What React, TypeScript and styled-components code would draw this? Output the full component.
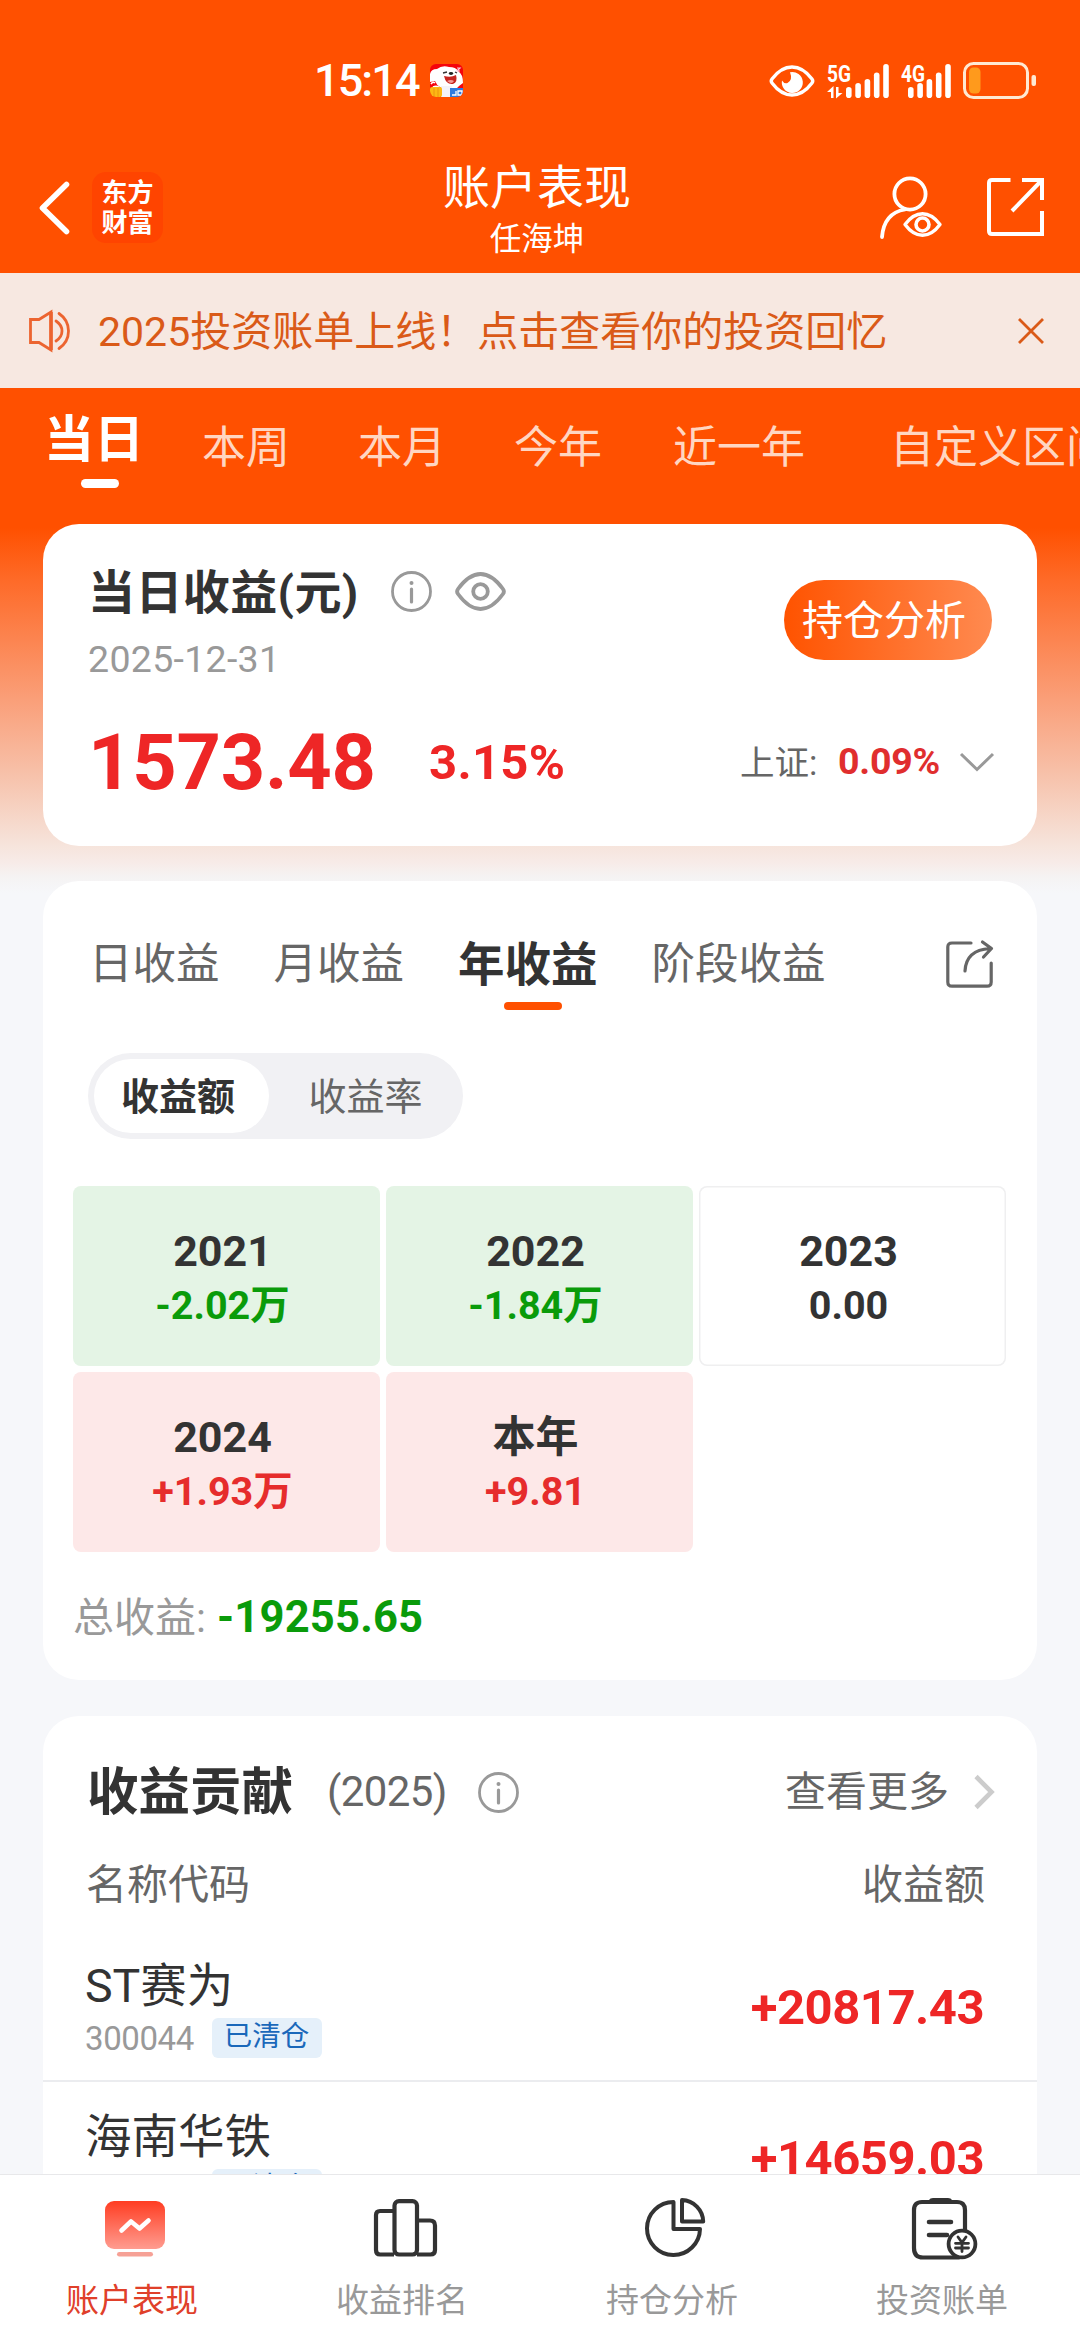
import React from "react";
import styled, { createGlobalStyle } from "styled-components";

const GlobalStyle = createGlobalStyle`
  * { box-sizing: border-box; }
  body {
    margin: 0;
    background: #f6f7fa;
    font-family: Roboto, "Noto Sans CJK SC", sans-serif;
    color: #333;
  }
  svg { display: block; flex: none; overflow: visible; }
`;

const Screen = styled.div`
  width: 1080px;
  height: 2340px;
  display: flex;
  flex-direction: column;
  overflow: hidden;
  background: linear-gradient(
    #ff5000 0, #ff5000 528px, #fe6a28 580px, #fa9f79 700px,
    #f7bfa7 770px, #f6e3da 843px, #f7ebe8 863px, #f5f3f3 877px, #f6f7fa 893px
  );
`;

const Content = styled.main`
  flex: 1;
  min-height: 0;
  overflow: hidden;
  display: flex;
  flex-direction: column;
`;

/* ---------- status bar ---------- */

const StatusBar = styled.div`
  flex: none;
  height: 161px;
  padding: 0 44px 0 314px;
  display: flex;
  align-items: center;
  color: #fff;
`;

const Clock = styled.span`
  font-size: 45px;
  font-weight: 500;
  line-height: 60px;
  letter-spacing: -1.9px;
  width: 116px;
  padding-top: 1px;
  white-space: nowrap;
`;

const StatusIcons = styled.div`
  margin-left: auto;
  display: flex;
  align-items: center;
`;

const Gap = styled.span<{ $w: number }>`
  flex: none;
  width: ${(p) => p.$w}px;
`;

const MascotIcon = () => (
  <svg width="33" height="33" viewBox="0 0 33 33">
    <defs>
      <clipPath id="mascot">
        <rect width="33" height="33" rx="6" />
      </clipPath>
    </defs>
    <g clipPath="url(#mascot)">
      <rect width="33" height="33" fill="#f5040c" />
      <path d="M0 10q1-5 7-5Q12 1 19 3q7 0 9 4 5 3 5 12l-4 3q-3 4-10 3Q8 25 5 17L0 18z" fill="#fff" />
      <path d="M1 20q2-3 4-1M3 23q4-2 7 1" stroke="#fff" strokeWidth="1.6" fill="none" />
      <rect x="11" y="22" width="11" height="11" fill="#f4f4fa" />
      <path d="M14 12q7 2 12-1 2 7-3 9-7 1-9-8z" fill="#c8241f" />
      <path d="M17 17q4-2 7 0-2 4-7 0z" fill="#f59a96" />
      <ellipse cx="21" cy="9.500" rx="2.200" ry="1.400" fill="#222" />
      <path d="M13 9l4-1M25 8l2 1" stroke="#333" strokeWidth="1.300" />
      <rect x="0" y="23" width="12" height="10" rx="2" fill="#fdb813" />
      <path d="M4 24v9M8 24v9" stroke="#ee9410" strokeWidth="1" />
      <rect x="20" y="24" width="13" height="9" fill="#2f7be0" />
      <path d="M22 31h4v-4M28 27h4v4h-4z" stroke="#fff" strokeWidth="1.300" fill="none" />
      <path d="M27 4h3l-3 3h3" stroke="#ffc4d8" strokeWidth="1.200" fill="none" />
    </g>
  </svg>
);

const StatusEyeIcon = () => (
  <svg width="46" height="32" viewBox="0 0 46 32" fill="none">
    <path
      d="M3 14Q12 2 23 2t20 12q1.500 2 0 4Q34 30 23 30T3 18q-1.500-2 0-4z"
      stroke="#fff"
      strokeWidth="3.400"
    />
    <path d="M21 7.200A10.500 10.500 0 1 1 13 15.500Q15 19 18.500 18 24 15 21 7.200z" fill="#fff" />
  </svg>
);

const barTops = [23, 19, 15, 8.500, 0];

const SignalIcon = ({ label, barsX, width, arrows }: { label: string; barsX: number; width: number; arrows?: boolean }) => (
  <svg width={width} height="34" viewBox={`0 0 ${width} 34`} fill="#fff">
    <text x="0" y="17.500" fontFamily="Roboto, sans-serif" fontWeight="700" fontSize="24" textLength="24" lengthAdjust="spacingAndGlyphs">
      {label}
    </text>
    {arrows && (
      <path d="M6.500 34h-2.500v-6H0l6.500-6zM9 23h2.500v6H15.500L9 34.500z" />
    )}
    {barTops.map((top, i) => (
      <rect key={top} x={barsX + i * 9.300} y={top} width="5.600" height={34 - top} rx="2.800" />
    ))}
  </svg>
);

const BatteryIcon = () => (
  <svg width="73" height="37" viewBox="0 0 73 37">
    <rect x="1.500" y="1.500" width="63" height="34" rx="9" fill="none" stroke="#ffe9d2" strokeWidth="3" />
    <rect x="6" y="5.500" width="11.500" height="26" rx="4.500" fill="#ff9a1c" />
    <rect x="68.500" y="13" width="4.500" height="11" rx="2" fill="#ffe9d2" />
  </svg>
);

/* ---------- navigation header ---------- */

const NavBar = styled.header`
  flex: none;
  height: 112px;
  padding: 0 36px 0 39px;
  display: grid;
  grid-template-columns: 404px 188px 1fr;
  align-items: start;
  color: #fff;
`;

const NavLeft = styled.div`
  display: flex;
  align-items: center;
  gap: 22px;
  padding-top: 11px;
`;

const Logo = styled.div`
  width: 71px;
  height: 71px;
  border-radius: 14px;
  background: #ff4400;
  display: flex;
  flex-direction: column;
  align-items: center;
  justify-content: center;
  font-size: 26px;
  font-weight: 700;
  line-height: 30px;
`;

const NavTitle = styled.div`
  text-align: center;
  white-space: nowrap;
`;

const Title = styled.h1`
  margin: 0;
  font-size: 47px;
  font-weight: 400;
  line-height: 54px;
`;

const Subtitle = styled.div`
  font-size: 31.500px;
  line-height: 40px;
  margin-top: 5px;
`;

const NavRight = styled.div`
  display: flex;
  justify-content: flex-end;
  align-items: center;
  gap: 46px;
  padding-top: 15px;
`;

const BackIcon = () => (
  <svg width="31" height="52" viewBox="0 0 31 52" fill="none" stroke="#fff" strokeWidth="5.600" strokeLinecap="round" strokeLinejoin="round">
    <path d="M27.500 2.500L3.500 26l24 23.500" />
  </svg>
);

const UserEyeIcon = () => (
  <svg width="62" height="62" viewBox="0 0 62 62" fill="none" stroke="#fff" strokeWidth="3.800">
    <circle cx="31" cy="18" r="15.600" />
    <path d="M3 61Q5 37 26 33.500" strokeLinecap="round" />
    <path d="M26 48.500q8-10.700 17.500-10.700T61 48.500q-8 10.800-17.500 10.800T26 48.500z" strokeWidth="3.400" strokeLinejoin="round" />
    <circle cx="43.500" cy="48.500" r="6.500" strokeWidth="3.600" />
  </svg>
);

const ExportIcon = () => (
  <svg width="57" height="58" viewBox="0 0 57 58" fill="none" stroke="#fff" strokeWidth="4">
    <path d="M23.500 2H5Q2 2 2 5v48q0 3 3 3h50V33" />
    <path d="M35 2h20v20M55 2L25 33" />
  </svg>
);

/* ---------- announcement ---------- */

const Announcement = styled.div`
  flex: none;
  height: 115px;
  padding: 0 36px 0 29px;
  display: flex;
  align-items: center;
  background: #f7e8e1;
  color: #da5a18;
  font-size: 41px;
  line-height: 60px;
`;

const AnnouncementText = styled.span`
  margin-left: 28px;
  padding-top: 2px;
  flex: 1;
  white-space: nowrap;
`;

const SpeakerIcon = () => (
  <svg width="41" height="42" viewBox="0 0 41 42" fill="none" stroke="#ec6430" strokeWidth="2.800">
    <path d="M1.500 9.500H10L22 2v38L10 32.500H1.500z" />
    <path d="M22 2v38" strokeWidth="3.600" />
    <path d="M27 11q6 4 6 10t-6 10M30 3.500Q39.500 10 39.500 21T30 38.500" strokeLinecap="round" />
  </svg>
);

const CloseIcon = () => (
  <svg width="26" height="26" viewBox="0 0 26 26" stroke="#da5a18" strokeWidth="2.800">
    <path d="M1 1l24 24M25 1L1 25" />
  </svg>
);

/* ---------- period tabs ---------- */

const PeriodTabs = styled.nav`
  flex: none;
  height: 136px;
  padding: 22px 0 0 44px;
  display: flex;
  align-items: flex-start;
  gap: 68px;
  overflow: hidden;
`;

const PeriodTab = styled.div<{ $active?: boolean; $ml?: number }>`
  flex: none;
  white-space: nowrap;
  line-height: 60px;
  font-size: ${(p) => (p.$active ? 50 : 44)}px;
  font-weight: ${(p) => (p.$active ? 700 : 400)};
  color: ${(p) => (p.$active ? "#fff" : "#ffd6c2")};
  padding-top: ${(p) => (p.$active ? 0 : 8)}px;
  margin-right: ${(p) => (p.$active ? -10 : 0)}px;
  margin-left: ${(p) => p.$ml ?? 0}px;
`;

const Underline = styled.div<{ $w: number; $h: number; $color: string; $mt: number; $shift: number }>`
  width: ${(p) => p.$w}px;
  height: ${(p) => p.$h}px;
  border-radius: 5px;
  background: ${(p) => p.$color};
  margin: ${(p) => p.$mt}px auto 0;
  transform: translateX(${(p) => p.$shift}px);
`;

/* ---------- cards ---------- */

const Card = styled.section<{ $h?: number; $mt?: number }>`
  flex: none;
  width: 994px;
  height: ${(p) => (p.$h ? p.$h + "px" : "auto")};
  margin: ${(p) => p.$mt ?? 0}px 43px 0;
  border-radius: 36px;
  background: #fff;
  overflow: hidden;
`;

const InfoIcon = () => (
  <svg width="41" height="41" viewBox="0 0 41 41" fill="none" stroke="#999">
    <circle cx="20.500" cy="20.500" r="19" strokeWidth="2.800" />
    <path d="M20.500 18v13" strokeWidth="3.200" strokeLinecap="round" />
    <circle cx="20.500" cy="12" r="2" fill="#999" stroke="none" />
  </svg>
);

const EyeIcon = () => (
  <svg width="51" height="39" viewBox="0 0 51 39" fill="none" stroke="#999" strokeWidth="3.800">
    <path d="M3 17Q14 2 25.500 2T48 17q1.800 2.500 0 5Q37 37 25.500 37T3 22q-1.800-2.500 0-5z" />
    <circle cx="25.500" cy="19.500" r="7.300" />
  </svg>
);

const SummaryTop = styled.div`
  display: flex;
  justify-content: space-between;
  padding: 41px 45px 0 45px;
`;

const SummaryTitle = styled.div`
  display: flex;
  align-items: center;
  height: 56px;
  font-size: 47px;
  font-weight: 700;
  line-height: 56px;
  white-space: nowrap;
`;

const SummaryLabel = styled.span`
  width: 303px;
  letter-spacing: 0.4px;
`;

const SummaryIcons = styled.span`
  display: flex;
  align-items: center;
  gap: 23px;
  margin-bottom: 4px;
`;

const SummaryDate = styled.div`
  margin-top: 18px;
  height: 40px;
  line-height: 40px;
  font-size: 37.500px;
  letter-spacing: 0.3px;
  color: #999;
`;

const AnalysisButton = styled.button`
  width: 208px;
  height: 80px;
  margin-top: 15px;
  padding: 2px 8px 0 0;
  border: 0;
  border-radius: 40px;
  background: linear-gradient(90deg, #ff5300, #ff8a50);
  color: #fff;
  font-family: inherit;
  font-size: 41px;
  line-height: 78px;
  white-space: nowrap;
`;

const SummaryNumbers = styled.div`
  display: flex;
  align-items: center;
  height: 100px;
  margin-top: 33px;
  padding: 0 43px 0 45px;
  white-space: nowrap;
`;

const Figure = styled.span<{ $size: number; $w?: number; $color?: string; $ls?: number }>`
  font-size: ${(p) => p.$size}px;
  font-weight: 700;
  color: ${(p) => p.$color ?? "#ee2626"};
  letter-spacing: ${(p) => p.$ls ?? 0}px;
  width: ${(p) => (p.$w ? p.$w + "px" : "auto")};
`;

const IndexName = styled.span`
  margin-left: auto;
  margin-bottom: 4px;
  width: 98px;
  font-size: 34.500px;
  color: #666;
`;

const IndexFigure = styled(Figure)`
  margin-bottom: 2px;
`;

const ChevronDown = () => (
  <svg width="34" height="18" viewBox="0 0 34 18" fill="none" stroke="#999" strokeWidth="3">
    <path d="M1 1l16 15.500L33 1" />
  </svg>
);

/* ---------- yearly profit card ---------- */

const ProfitTabs = styled.div`
  display: flex;
  align-items: flex-start;
  gap: 54px;
  height: 129px;
  padding: 54px 44px 0 46px;
`;

const ProfitTab = styled.div<{ $active?: boolean }>`
  line-height: 60px;
  white-space: nowrap;
  font-size: ${(p) => (p.$active ? 46.500 : 43.500)}px;
  font-weight: ${(p) => (p.$active ? 700 : 400)};
  color: ${(p) => (p.$active ? "#333" : "#666")};
`;

const ShareButton = styled.div`
  margin: 6px 0 0 auto;
`;

const ShareIcon = () => (
  <svg width="47" height="47" viewBox="0 0 47 47" fill="none" stroke="#666" strokeWidth="3.200">
    <path d="M25 2H6Q1.800 2 1.800 6v35q0 4.200 4.200 4.200h35q4.200 0 4.200-4.200V22" strokeLinecap="round" />
    <path d="M19 30Q20 9 44 7.500M36.500 1l9 6.500-8 8.500" strokeLinecap="round" strokeLinejoin="round" />
  </svg>
);

const Segmented = styled.div`
  display: flex;
  width: 375px;
  height: 86px;
  margin: 43px 0 0 45px;
  padding: 6px;
  border-radius: 43px;
  background: #f1f1f4;
`;

const Segment = styled.div<{ $active?: boolean }>`
  width: ${(p) => (p.$active ? 175 : 188)}px;
  height: 74px;
  padding: ${(p) => (p.$active ? "1px 7px 0 0" : "1px 0 0 5px")};
  line-height: 74px;
  border-radius: 37px;
  text-align: center;
  font-size: 38px;
  font-weight: ${(p) => (p.$active ? 700 : 400)};
  color: ${(p) => (p.$active ? "#333" : "#666")};
  background: ${(p) => (p.$active ? "#fff" : "transparent")};
`;

const YearGrid = styled.div`
  display: grid;
  grid-template-columns: repeat(3, 1fr);
  grid-auto-rows: 180px;
  gap: 6px;
  margin: 47px 31px 0 30px;
`;

type Tone = "up" | "down" | "flat";
const toneBg = { up: "#fde8e8", down: "#e4f4e5", flat: "#fff" };
const toneText = { up: "#e62c2c", down: "#0a9b0a", flat: "#333" };

const YearCell = styled.div<{ $tone: Tone }>`
  border-radius: 8px;
  background: ${(p) => toneBg[p.$tone]};
  box-shadow: ${(p) => (p.$tone === "flat" ? "inset 0 0 0 1.5px #efeff0" : "none")};
  padding: 38px 8px 0 0;
  text-align: center;
  font-weight: 700;
`;

const YearName = styled.div`
  height: 54px;
  line-height: 54px;
  font-size: 43px;
`;

const YearValue = styled.div<{ $tone: Tone }>`
  height: 56px;
  line-height: 56px;
  font-size: 39.500px;
  color: ${(p) => toneText[p.$tone]};
`;

const TotalRow = styled.div`
  display: flex;
  align-items: center;
  height: 60px;
  margin: 36px 0 0 30px;
  font-size: 41px;
  line-height: 60px;
  color: #999;
  white-space: nowrap;
`;

const TotalLabel = styled.span`
  width: 144px;
`;

/* ---------- contribution card ---------- */

const ContributionHead = styled.div`
  display: flex;
  align-items: center;
  height: 106px;
  padding: 46px 42px 0 44px;
  white-space: nowrap;
  line-height: 60px;
`;

const ContributionTitle = styled.h2`
  margin: 0;
  padding-top: 2px;
  width: 240px;
  font-size: 51.500px;
  line-height: 58px;
  font-weight: 700;
`;

const ContributionYear = styled.span`
  width: 151px;
  font-size: 42px;
  letter-spacing: -0.6px;
  color: #666;
`;

const MoreLink = styled.span`
  margin-left: auto;
  display: flex;
  align-items: center;
  gap: 25px;
  font-size: 41px;
  color: #666;
`;

const ChevronRight = () => (
  <svg width="21" height="34" viewBox="0 0 21 34" fill="none" stroke="#ccc" strokeWidth="4.600">
    <path d="M2 1.500L17.500 17 2 32.500" />
  </svg>
);

const ColumnHead = styled.div`
  display: flex;
  justify-content: space-between;
  height: 60px;
  margin: 33px 0 16px;
  padding: 0 52px 0 43px;
  font-size: 41px;
  line-height: 60px;
  color: #666;
`;

const StockRow = styled.div`
  display: flex;
  justify-content: space-between;
  align-items: center;
  height: 151px;
  padding: 3px 53px 0 42px;
  border-bottom: 2px solid #ebecef;
`;

const StockName = styled.div`
  height: 50px;
  line-height: 50px;
  font-size: 46.500px;
`;

const StockMeta = styled.div`
  display: flex;
  align-items: center;
  height: 40px;
  margin-top: 7px;
`;

const StockCode = styled.span`
  width: 127px;
  padding-top: 1px;
  font-size: 33px;
  letter-spacing: -0.4px;
  color: #999;
`;

const Badge = styled.span`
  width: 110px;
  height: 40px;
  padding-right: 1px;
  border-radius: 6px;
  background: #e5f0fa;
  color: #1a68ba;
  font-size: 28.500px;
  line-height: 38px;
  text-align: center;
`;

const StockInfo = styled.div`
  padding-top: 4px;
`;

/* ---------- bottom navigation ---------- */

const BottomNav = styled.nav`
  flex: none;
  height: 166px;
  display: grid;
  grid-template-columns: repeat(4, 1fr);
  background: #fff;
  border-top: 1px solid #e8e8ea;
`;

const NavItem = styled.div<{ $active?: boolean }>`
  display: flex;
  flex-direction: column;
  align-items: center;
  padding-top: 22px;
  font-size: 33px;
  line-height: 44px;
  color: ${(p) => (p.$active ? "#e0402a" : "#999")};
`;

const NavLabel = styled.span`
  margin: 18px 6px 0 0;
`;

const PerformanceIcon = () => (
  <svg width="66" height="64" viewBox="0 0 66 64" fill="none">
    <defs>
      <linearGradient id="perf" x1="0" y1="0" x2="0" y2="1">
        <stop offset="0" stopColor="#ff3d22" />
        <stop offset="1" stopColor="#ff9c90" />
      </linearGradient>
    </defs>
    <rect x="3" y="4" width="60" height="48" rx="9" fill="url(#perf)" />
    <path d="M19.500 33.500L29 24.500l8.500 7L46.500 23.500" stroke="#fff" strokeWidth="4.600" strokeLinecap="round" strokeLinejoin="round" />
    <rect x="15" y="55" width="36" height="4.600" rx="2.300" fill="#f6a196" />
  </svg>
);

const RankingIcon = () => (
  <svg width="66" height="64" viewBox="0 0 66 64" fill="none" stroke="#333" strokeWidth="4.200">
    <path d="M22 14H8q-4 0-4 4v35q0 4.500 4 4.500h14" />
    <rect x="22.500" y="4.100" width="22.500" height="53.400" rx="4.500" />
    <path d="M45 23.500h13q5 0 5 5V53q0 4.500-4.500 4.500H45" />
  </svg>
);

const PieIcon = () => (
  <svg width="66" height="64" viewBox="0 0 66 64" fill="none" stroke="#333" strokeWidth="4" strokeLinejoin="round">
    <path d="M31.500 5v27H58A26.500 26.500 0 1 1 31.500 5z" />
    <path d="M40 3v21.500h21.200A22 22 0 0 0 40 3z" />
  </svg>
);

const BillIcon = () => (
  <svg width="66" height="64" viewBox="0 0 66 64" fill="none" stroke="#333" strokeWidth="4.200" strokeLinecap="round">
    <path d="M53 34V13q0-8-8-8H10Q2 5 2 13v38q0 9.500 9 9.500h36" />
    <path d="M17 3q1-2 4-2h15q3 0 4 2v3H17z" fill="#333" stroke="none" />
    <path d="M17 25h22M17 38h18" strokeWidth="4.600" />
    <circle cx="50" cy="47" r="13.400" fill="#fff" strokeWidth="3.800" />
    <path d="M46 40l4 5.500 4-5.500M50 46v8.500M43.500 46.300h13M43.500 51h13" strokeWidth="2.800" />
  </svg>
);

const periods = [
  { name: "本周", offset: 0 },
  { name: "本月", offset: 0 },
  { name: "今年", offset: 0 },
  { name: "近一年", offset: 3 },
  { name: "自定义区间", offset: 17 },
];

const years: { name: string; value: string; tone: Tone }[] = [
  { name: "2021", value: "-2.02万", tone: "down" },
  { name: "2022", value: "-1.84万", tone: "down" },
  { name: "2023", value: "0.00", tone: "flat" },
  { name: "2024", value: "+1.93万", tone: "up" },
  { name: "本年", value: "+9.81", tone: "up" },
];

const stocks = [
  { name: "ST赛为", code: "300044", amount: "+20817.43" },
  { name: "海南华铁", code: "603300", amount: "+14659.03" },
];

export default function App() {
  return (
    <Screen>
      <GlobalStyle />
      <Content>
        <StatusBar>
          <Clock>15:14</Clock>
          <MascotIcon />
          <StatusIcons>
            <StatusEyeIcon />
            <Gap $w={12} />
            <SignalIcon label="5G" barsX={19} width={62} arrows />
            <Gap $w={12} />
            <SignalIcon label="4G" barsX={7} width={50} />
            <Gap $w={12} />
            <BatteryIcon />
          </StatusIcons>
        </StatusBar>

        <NavBar>
          <NavLeft>
            <BackIcon />
            <Logo>
              <span>东方</span>
              <span>财富</span>
            </Logo>
          </NavLeft>
          <NavTitle>
            <Title>账户表现</Title>
            <Subtitle>任海坤</Subtitle>
          </NavTitle>
          <NavRight>
            <UserEyeIcon />
            <ExportIcon />
          </NavRight>
        </NavBar>

        <Announcement>
          <SpeakerIcon />
          <AnnouncementText>2025投资账单上线！点击查看你的投资回忆</AnnouncementText>
          <CloseIcon />
        </Announcement>

        <PeriodTabs>
          <PeriodTab $active>
            当日
            <Underline $w={38} $h={9} $color="#fff" $mt={9} $shift={6} />
          </PeriodTab>
          {periods.map((p) => (
            <PeriodTab key={p.name} $ml={p.offset}>
              {p.name}
            </PeriodTab>
          ))}
        </PeriodTabs>

        <Card $h={322}>
          <SummaryTop>
            <div>
              <SummaryTitle>
                <SummaryLabel>当日收益(元)</SummaryLabel>
                <SummaryIcons>
                  <InfoIcon />
                  <EyeIcon />
                </SummaryIcons>
              </SummaryTitle>
              <SummaryDate>2025-12-31</SummaryDate>
            </div>
            <AnalysisButton>持仓分析</AnalysisButton>
          </SummaryTop>
          <SummaryNumbers>
            <Figure $size={77.5} $w={341} $ls={-0.2}>1573.48</Figure>
            <Figure $size={49} $ls={0.3}>3.15%</Figure>
            <IndexName>上证:</IndexName>
            <IndexFigure $size={37.5} $w={122} $ls={-0.2} $color="#e02e2e">0.09%</IndexFigure>
            <ChevronDown />
          </SummaryNumbers>
        </Card>

        <Card $h={799} $mt={35}>
          <ProfitTabs>
            <ProfitTab>日收益</ProfitTab>
            <ProfitTab>月收益</ProfitTab>
            <ProfitTab $active>
              年收益
              <Underline $w={58} $h={8} $color="#ff5000" $mt={7} $shift={5} />
            </ProfitTab>
            <ProfitTab>阶段收益</ProfitTab>
            <ShareButton>
              <ShareIcon />
            </ShareButton>
          </ProfitTabs>
          <Segmented>
            <Segment $active>收益额</Segment>
            <Segment>收益率</Segment>
          </Segmented>
          <YearGrid>
            {years.map((y) => (
              <YearCell key={y.name} $tone={y.tone}>
                <YearName>{y.name}</YearName>
                <YearValue $tone={y.tone}>{y.value}</YearValue>
              </YearCell>
            ))}
          </YearGrid>
          <TotalRow>
            <TotalLabel>总收益:</TotalLabel>
            <Figure $size={43.5} $ls={0.2} $color="#0a9b0a">-19255.65</Figure>
          </TotalRow>
        </Card>

        <Card $mt={36}>
          <ContributionHead>
            <ContributionTitle>收益贡献</ContributionTitle>
            <ContributionYear>(2025)</ContributionYear>
            <InfoIcon />
            <MoreLink>
              查看更多
              <ChevronRight />
            </MoreLink>
          </ContributionHead>
          <ColumnHead>
            <span>名称代码</span>
            <span>收益额</span>
          </ColumnHead>
          {stocks.map((s) => (
            <StockRow key={s.code}>
              <StockInfo>
                <StockName>{s.name}</StockName>
                <StockMeta>
                  <StockCode>{s.code}</StockCode>
                  <Badge>已清仓</Badge>
                </StockMeta>
              </StockInfo>
              <Figure $size={49} $ls={-0.5}>{s.amount}</Figure>
            </StockRow>
          ))}
        </Card>
      </Content>

      <BottomNav>
        <NavItem $active>
          <PerformanceIcon />
          <NavLabel>账户表现</NavLabel>
        </NavItem>
        <NavItem>
          <RankingIcon />
          <NavLabel>收益排名</NavLabel>
        </NavItem>
        <NavItem>
          <PieIcon />
          <NavLabel>持仓分析</NavLabel>
        </NavItem>
        <NavItem>
          <BillIcon />
          <NavLabel>投资账单</NavLabel>
        </NavItem>
      </BottomNav>
    </Screen>
  );
}
